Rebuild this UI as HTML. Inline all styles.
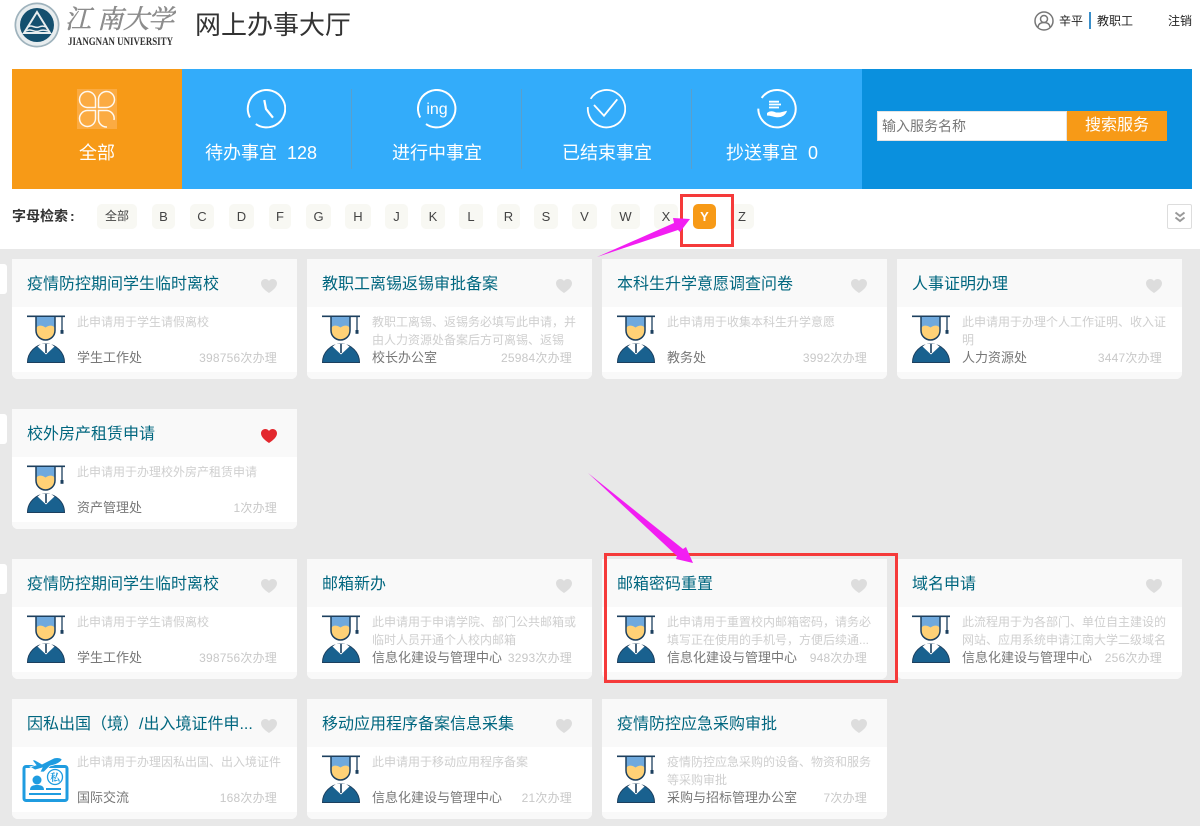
<!DOCTYPE html>
<html lang="zh-CN">
<head>
<meta charset="utf-8">
<title>网上办事大厅</title>
<style>
html,body{margin:0;padding:0;background:#fff}
body{width:1200px;height:826px;position:relative;overflow:hidden;font-family:"Liberation Sans","Noto Sans CJK SC",sans-serif}
.a{position:absolute;white-space:nowrap}
.grey{position:absolute;left:0;top:249px;width:1200px;height:577px;background:#e8e8e8}
.tab{position:absolute;left:0;width:7px;height:30px;background:#fff;border-radius:0 3px 3px 0}
.stat{position:absolute;top:140px;height:26px;line-height:26px;color:#fff;font-size:18px;text-align:center;white-space:nowrap}
.sep{position:absolute;top:89px;width:1px;height:80px;background:#5a9fcb}
.lt{position:absolute;top:204px;height:25px;line-height:25px;text-align:center;background:#f8f8f3;border-radius:5px;font-size:13px;color:#444}
.card{position:absolute;width:285px;height:120px;background:#fff;border-radius:0 0 6px 6px;overflow:hidden}
.card .h{position:absolute;left:0;top:0;width:285px;height:48px;background:#f9f9f9}
.card .f{position:absolute;left:0;top:113px;width:285px;height:7px;background:#f9f9f9}
.card .t{position:absolute;left:15px;top:14px;line-height:24px;font-size:16px;color:#00667f;white-space:nowrap}
.card .d{position:absolute;left:65px;top:54px;width:212px;line-height:18px;font-size:12px;color:#cfcfcf;white-space:nowrap}
.card .o{position:absolute;left:65px;top:89px;line-height:20px;font-size:13px;color:#777;white-space:nowrap}
.card .n{position:absolute;right:20px;top:89px;line-height:20px;font-size:12px;letter-spacing:.2px;color:#c8c8c8;white-space:nowrap}
.card .hi{position:absolute;left:249px;top:20px;width:16px;height:14px}
.card .ic{position:absolute;left:15px;top:56px;width:38px;height:48px}
.box{position:absolute;border:3px solid #f53a3a;box-sizing:border-box}
</style>
</head>
<body>
<svg width="0" height="0" style="position:absolute">
<defs>
<symbol id="grad" viewBox="0 0 38 48">
<path d="M0 1.300H38" stroke="#1c3f5e" stroke-width="1.600" fill="none"/>
<path d="M35 1.500V16" stroke="#1c3f5e" stroke-width="1.300" fill="none"/>
<rect x="33.500" y="15" width="3" height="3.800" fill="#1c3f5e"/>
<path d="M9 2V15.500A9.500 9.500 0 0 0 28 15.500V2Z" fill="#6fa9dd"/>
<path d="M9 14C9.500 10 15 9.500 18.500 12.500C22 9.500 27.500 10 28 14V15.500A9.500 9.500 0 0 1 9 15.500Z" fill="#ffd176"/>
<path d="M9 2V15.500A9.500 9.500 0 0 0 28 15.500V2" fill="none" stroke="#1c3f5e" stroke-width="1.500"/>
<path d="M0.500 47.500A18.500 18.500 0 0 1 37.500 47.500Z" fill="#19618f" stroke="#1c3f5e" stroke-width="1"/>
<path d="M10.500 31.500L14 29H24L27.500 31.500L19 39.500Z" fill="#fff"/>
<path d="M18.200 29H19.800V38H18.200Z" fill="#1c3f5e"/>
</symbol>
<symbol id="heart" viewBox="0 0 16 14">
<path d="M8 14C3.500 11 0 8 0 4.300C0 1.800 1.900 0 4.200 0C5.800 0 7.200 .8 8 2C8.800 .8 10.200 0 11.800 0C14.100 0 16 1.800 16 4.300C16 8 12.500 11 8 14Z"/>
</symbol>
</defs>
</svg>

<!-- header -->
<svg class="a" style="left:14px;top:2px" width="162" height="46" viewBox="0 0 162 46">
<circle cx="23" cy="23" r="22.500" fill="#9fb3bd"/>
<circle cx="23" cy="23" r="20.800" fill="#e8edef"/>
<circle cx="23" cy="23" r="17" fill="#14506f"/>
<path d="M23 10L36 31H10Z" fill="none" stroke="#e8edef" stroke-width="2"/>
<path d="M14 25C18 22 21 27 25 25C28 23.500 30 24 32 25M12 29C17 26 21 31 25 29C28 27.500 31 28 34 29" fill="none" stroke="#e8edef" stroke-width="1.500"/>
<text y="26" font-family="'Noto Serif CJK SC',serif" font-size="26" fill="#8c8c8c" stroke="#8c8c8c" stroke-width=".5" font-style="italic"><tspan x="51">江</tspan><tspan x="83">南</tspan><tspan x="109">大</tspan><tspan x="134">学</tspan></text>
<text x="54" y="43" font-family="'Liberation Serif',serif" font-weight="bold" font-size="12" fill="#333" textLength="105" lengthAdjust="spacingAndGlyphs">JIANGNAN UNIVERSITY</text>
</svg>
<div class="a" style="left:195px;top:6px;line-height:38px;font-size:26px;color:#333">网上办事大厅</div>
<svg class="a" style="left:1034px;top:11px" width="20" height="20" viewBox="0 0 20 20" fill="none" stroke="#777" stroke-width="1.500">
<circle cx="10" cy="10" r="9"/><circle cx="10" cy="8" r="3.500"/><path d="M4 16C4.500 12.500 7 11.500 10 11.500C13 11.500 15.500 12.500 16 16"/>
</svg>
<div class="a" style="left:1059px;top:11px;line-height:20px;font-size:12px;color:#222">辛平</div>
<div class="a" style="left:1089px;top:12px;width:2px;height:17px;background:#3b8fca"></div>
<div class="a" style="left:1097px;top:11px;line-height:20px;font-size:12px;color:#222">教职工</div>
<div class="a" style="left:1168px;top:11px;line-height:20px;font-size:12px;color:#222">注销</div>

<!-- stats bar -->
<div class="a" style="left:12px;top:69px;width:170px;height:120px;background:#f79a17"></div>
<div class="a" style="left:182px;top:69px;width:680px;height:120px;background:#33acfa"></div>
<div class="a" style="left:862px;top:69px;width:330px;height:120px;background:#0a90de"></div>
<div class="sep" style="left:351px"></div>
<div class="sep" style="left:521px"></div>
<div class="sep" style="left:691px"></div>

<svg class="a" style="left:77px;top:89px" width="40" height="40" viewBox="0 0 40 40">
<rect width="40" height="40" fill="#fbab42"/>
<g fill="none" stroke="#fff" stroke-width="1.500" stroke-opacity=".92">
<path d="M18.500 18.500H10A8 8 0 1 1 18.500 10Z"/>
<path d="M21.500 18.500H30A8 8 0 1 0 21.500 10Z"/>
<path d="M18.500 21.500H10A8 8 0 1 0 18.500 30Z"/>
<path d="M21.500 30V21.500H30A8 8 0 0 1 37 31"/>
<path d="M21.500 30A8 8 0 0 0 30 38"/>
</g>
</svg>
<svg class="a" style="left:246px;top:89px" width="40" height="40" viewBox="0 0 40 40" fill="none" stroke="#fff" stroke-width="2">
<circle cx="20.500" cy="19.700" r="18.700" stroke-dasharray="108.500 9" transform="rotate(152 20.500 19.700)"/>
<path d="M18.300 11L20 20L27 28.700" stroke-width="2.200"/>
</svg>
<svg class="a" style="left:417px;top:89px" width="40" height="40" viewBox="0 0 40 40" fill="none" stroke="#fff" stroke-width="2">
<circle cx="19.700" cy="19.700" r="18.700" stroke-dasharray="108.500 9" transform="rotate(152 19.700 19.700)"/>
<text x="20" y="25" text-anchor="middle" font-family="'Liberation Sans',sans-serif" font-size="16" fill="#fff" stroke="none">ing</text>
</svg>
<svg class="a" style="left:586px;top:89px" width="40" height="40" viewBox="0 0 40 40" fill="none" stroke="#fff" stroke-width="1.800">
<circle cx="20.500" cy="19.700" r="18.700" stroke-dasharray="108.500 9" transform="rotate(212 20.500 19.700)"/>
<path d="M8 16L18 26.700L31.300 10.300"/>
</svg>
<svg class="a" style="left:757px;top:89px" width="40" height="40" viewBox="0 0 40 40" fill="none" stroke="#fff" stroke-width="2">
<circle cx="20" cy="19.700" r="18.700" stroke-dasharray="106 11.500" transform="rotate(215 20 19.700)"/>
<path d="M12 12.700H22M12 15.500H24M12 18.500H22" stroke-width="1.800"/>
<path d="M10 24C13 21.500 16 22 19 23.500H23L30 21.800C29 26 25 28.300 21 28.300C17 28.300 14 26.500 10 26.500Z" fill="#fff" stroke="none"/>
</svg>

<div class="stat" style="left:12px;width:170px">全部</div>
<div class="stat" style="left:205px">待办事宜&nbsp; 128</div>
<div class="stat" style="left:392px">进行中事宜</div>
<div class="stat" style="left:562px">已结束事宜</div>
<div class="stat" style="left:726px">抄送事宜&nbsp; 0</div>

<div class="a" style="left:877px;top:111px;width:190px;height:30px;background:#fff;box-sizing:border-box;padding-left:4px;line-height:29px;font-size:14px;color:#777;border:1px solid #e4e4e4">输入服务名称</div>
<div class="a" style="left:1067px;top:111px;width:100px;height:30px;background:#f79a17;color:#fff;font-size:16px;line-height:30px;text-align:center">搜索服务</div>

<!-- letters -->
<div class="a" style="left:12px;top:206px;line-height:20px;font-size:14px;font-weight:bold;color:#333">字母检索<span style="margin-left:2px">:</span></div>
<div class="lt" style="left:97px;width:40px;font-size:12px">全部</div>
<div class="lt" style="left:152px;width:23px">B</div>
<div class="lt" style="left:190px;width:24px">C</div>
<div class="lt" style="left:229px;width:25px">D</div>
<div class="lt" style="left:269px;width:22px">F</div>
<div class="lt" style="left:306px;width:25px">G</div>
<div class="lt" style="left:345px;width:26px">H</div>
<div class="lt" style="left:385px;width:23px">J</div>
<div class="lt" style="left:421px;width:24px">K</div>
<div class="lt" style="left:459px;width:24px">L</div>
<div class="lt" style="left:497px;width:23px">R</div>
<div class="lt" style="left:534px;width:24px">S</div>
<div class="lt" style="left:572px;width:25px">V</div>
<div class="lt" style="left:611px;width:29px">W</div>
<div class="lt" style="left:654px;width:24px">X</div>
<div class="lt" style="left:693px;width:23px;background:#f79a17;color:#fff;font-weight:bold">Y</div>
<div class="lt" style="left:730px;width:24px">Z</div>
<div class="a" style="left:1167px;top:204px;width:25px;height:25px;box-sizing:border-box;border:1px solid #ddd;border-radius:2px;background:#fff"></div>
<svg class="a" style="left:1174px;top:211px" width="12" height="12" viewBox="0 0 12 12" fill="none" stroke="#999" stroke-width="2"><path d="M1.500 1.500L6 5L10.500 1.500M1.500 6.500L6 10L10.500 6.500"/></svg>

<div class="grey"></div>
<div class="tab" style="top:264px"></div>
<div class="tab" style="top:414px"></div>
<div class="tab" style="top:564px"></div>

<!-- row 1 -->
<div class="card" style="left:12px;top:259px"><div class="h"></div><div class="f"></div><div class="t">疫情防控期间学生临时离校</div><svg class="hi" fill="#ddd"><use href="#heart"/></svg><svg class="ic"><use href="#grad"/></svg><div class="d">此申请用于学生请假离校</div><div class="o">学生工作处</div><div class="n">398756次办理</div></div>
<div class="card" style="left:307px;top:259px"><div class="h"></div><div class="f"></div><div class="t">教职工离锡返锡审批备案</div><svg class="hi" fill="#ddd"><use href="#heart"/></svg><svg class="ic"><use href="#grad"/></svg><div class="d">教职工离锡、返锡务必填写此申请，并<br>由人力资源处备案后方可离锡、返锡</div><div class="o">校长办公室</div><div class="n">25984次办理</div></div>
<div class="card" style="left:602px;top:259px"><div class="h"></div><div class="f"></div><div class="t">本科生升学意愿调查问卷</div><svg class="hi" fill="#ddd"><use href="#heart"/></svg><svg class="ic"><use href="#grad"/></svg><div class="d">此申请用于收集本科生升学意愿</div><div class="o">教务处</div><div class="n">3992次办理</div></div>
<div class="card" style="left:897px;top:259px"><div class="h"></div><div class="f"></div><div class="t">人事证明办理</div><svg class="hi" fill="#ddd"><use href="#heart"/></svg><svg class="ic"><use href="#grad"/></svg><div class="d">此申请用于办理个人工作证明、收入证<br>明</div><div class="o">人力资源处</div><div class="n">3447次办理</div></div>

<!-- row 2 -->
<div class="card" style="left:12px;top:409px"><div class="h"></div><div class="f"></div><div class="t">校外房产租赁申请</div><svg class="hi" fill="#e3282e"><use href="#heart"/></svg><svg class="ic"><use href="#grad"/></svg><div class="d">此申请用于办理校外房产租赁申请</div><div class="o">资产管理处</div><div class="n">1次办理</div></div>

<!-- row 3 -->
<div class="card" style="left:12px;top:559px"><div class="h"></div><div class="f"></div><div class="t">疫情防控期间学生临时离校</div><svg class="hi" fill="#ddd"><use href="#heart"/></svg><svg class="ic"><use href="#grad"/></svg><div class="d">此申请用于学生请假离校</div><div class="o">学生工作处</div><div class="n">398756次办理</div></div>
<div class="card" style="left:307px;top:559px"><div class="h"></div><div class="f"></div><div class="t">邮箱新办</div><svg class="hi" fill="#ddd"><use href="#heart"/></svg><svg class="ic"><use href="#grad"/></svg><div class="d">此申请用于申请学院、部门公共邮箱或<br>临时人员开通个人校内邮箱</div><div class="o">信息化建设与管理中心</div><div class="n">3293次办理</div></div>
<div class="card" style="left:602px;top:559px"><div class="h"></div><div class="f"></div><div class="t">邮箱密码重置</div><svg class="hi" fill="#ddd"><use href="#heart"/></svg><svg class="ic"><use href="#grad"/></svg><div class="d">此申请用于重置校内邮箱密码，请务必<br>填写正在使用的手机号，方便后续通...</div><div class="o">信息化建设与管理中心</div><div class="n">948次办理</div></div>
<div class="card" style="left:897px;top:559px"><div class="h"></div><div class="f"></div><div class="t">域名申请</div><svg class="hi" fill="#ddd"><use href="#heart"/></svg><svg class="ic"><use href="#grad"/></svg><div class="d">此流程用于为各部门、单位自主建设的<br>网站、应用系统申请江南大学二级域名</div><div class="o">信息化建设与管理中心</div><div class="n">256次办理</div></div>

<!-- row 4 -->
<div class="card" style="left:12px;top:699px"><div class="h"></div><div class="f"></div><div class="t">因私出国（境）/出入境证件申...</div><svg class="hi" fill="#ddd"><use href="#heart"/></svg>
<svg class="a" style="left:10px;top:58px" width="47" height="46" viewBox="0 0 47 46">
<rect x="2" y="9.500" width="43" height="34" rx="2" fill="none" stroke="#1f9ce0" stroke-width="3"/>
<path d="M8 10L14 8L10 3L13 3L20 7L32 1C36 0 40 1 40 3C38 6 33 8 28 9L22 15L18 15L20 11L13 13Z" fill="#1f9ce0" stroke="#fff" stroke-width=".8"/>
<circle cx="15" cy="23" r="4.500" fill="#1f9ce0"/>
<path d="M8 33C8 29 11 28 15 28C19 28 22 29 22 33Z" fill="#1f9ce0"/>
<rect x="7" y="36" width="32" height="2" fill="#1f9ce0"/>
<rect x="24" y="31" width="15" height="2" fill="#1f9ce0"/>
<circle cx="33" cy="20" r="7.500" fill="#fff" stroke="#1f9ce0" stroke-width="1.300"/>
<text x="33" y="24" text-anchor="middle" font-family="'Noto Serif CJK SC',serif" font-size="10" font-weight="bold" fill="#1f9ce0">私</text>
</svg>
<div class="d">此申请用于办理因私出国、出入境证件</div><div class="o">国际交流</div><div class="n">168次办理</div></div>
<div class="card" style="left:307px;top:699px"><div class="h"></div><div class="f"></div><div class="t">移动应用程序备案信息采集</div><svg class="hi" fill="#ddd"><use href="#heart"/></svg><svg class="ic"><use href="#grad"/></svg><div class="d">此申请用于移动应用程序备案</div><div class="o">信息化建设与管理中心</div><div class="n">21次办理</div></div>
<div class="card" style="left:602px;top:699px"><div class="h"></div><div class="f"></div><div class="t">疫情防控应急采购审批</div><svg class="hi" fill="#ddd"><use href="#heart"/></svg><svg class="ic"><use href="#grad"/></svg><div class="d">疫情防控应急采购的设备、物资和服务<br>等采购审批</div><div class="o">采购与招标管理办公室</div><div class="n">7次办理</div></div>

<!-- annotations -->
<div class="box" style="left:680px;top:194px;width:54px;height:53px"></div>
<div class="box" style="left:604px;top:553px;width:294px;height:130px"></div>
<svg class="a" style="left:0;top:0" width="1200" height="826" viewBox="0 0 1200 826">
<polygon points="597,257 674,223 673,218 690,219 680,232 678,230" fill="#f21ef2"/>
<polygon points="588,473 683,549 686,547 693,563 676,559 677,556" fill="#f21ef2"/>
</svg>
</body>
</html>
